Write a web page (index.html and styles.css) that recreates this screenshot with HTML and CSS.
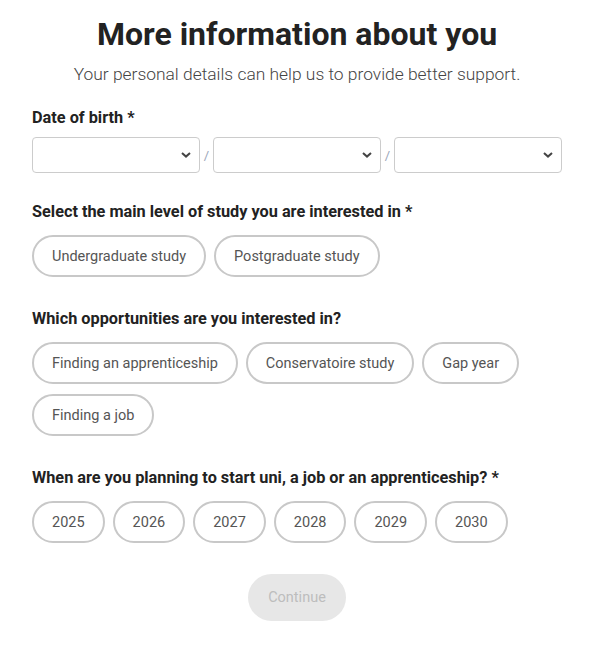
FILE: index.html
```html
<!DOCTYPE html>
<html lang="en">
<head>
<meta charset="utf-8">
<title>More information about you</title>
<link rel="stylesheet" href="styles.css">
</head>
<body>
<main class="form">
  <h1 class="title">More information about you</h1>
  <p class="lead">Your personal details can help us to provide better support.</p>

  <section class="field field-dob">
    <h2 class="label">Date of birth *</h2>
    <div class="dob">
      <div class="select"><svg class="chev" viewBox="0 0 10 6" width="10" height="6"><path d="M1 1l4 3.6 4-3.6" fill="none" stroke="#444" stroke-width="2"/></svg></div>
      <span class="sep">/</span>
      <div class="select"><svg class="chev" viewBox="0 0 10 6" width="10" height="6"><path d="M1 1l4 3.6 4-3.6" fill="none" stroke="#444" stroke-width="2"/></svg></div>
      <span class="sep">/</span>
      <div class="select"><svg class="chev" viewBox="0 0 10 6" width="10" height="6"><path d="M1 1l4 3.6 4-3.6" fill="none" stroke="#444" stroke-width="2"/></svg></div>
    </div>
  </section>

  <section class="field">
    <h2 class="label">Select the main level of study you are interested in *</h2>
    <div class="pills">
      <button class="pill">Undergraduate study</button>
      <button class="pill">Postgraduate study</button>
    </div>
  </section>

  <section class="field">
    <h2 class="label">Which opportunities are you interested in?</h2>
    <div class="pills">
      <button class="pill">Finding an apprenticeship</button>
      <button class="pill">Conservatoire study</button>
      <button class="pill">Gap year</button>
      <button class="pill">Finding a job</button>
    </div>
  </section>

  <section class="field">
    <h2 class="label">When are you planning to start uni, a job or an apprenticeship? *</h2>
    <div class="pills">
      <button class="pill">2025</button>
      <button class="pill">2026</button>
      <button class="pill">2027</button>
      <button class="pill">2028</button>
      <button class="pill">2029</button>
      <button class="pill">2030</button>
    </div>
  </section>

  <div class="actions">
    <button class="continue" disabled>Continue</button>
  </div>
</main>
</body>
</html>
```

FILE: styles.css
```css
* { box-sizing: border-box; }

html, body {
  margin: 0;
  background: #fff;
}

body {
  font-family: Roboto, "Noto Sans", sans-serif;
  color: #222;
}

.form {
  width: 530px;
  margin-left: 32px;
  padding-top: 14px;
}

.title {
  margin: 0;
  font-size: 32px;
  font-weight: 700;
  line-height: 40px;
  text-align: center;
  color: #222;
}

.lead {
  margin: 9px 0 0;
  font-size: 17.4px;
  font-weight: 300;
  line-height: 22px;
  text-align: center;
  color: #444;
}

.field {
  margin-top: 32px;
}

.field-dob {
  margin-top: 23px;
}

.field-dob + .field {
  margin-top: 29px;
}

.label {
  margin: 0 0 13px;
  font-size: 16.3px;
  font-weight: 700;
  line-height: 20px;
  color: #222;
}

.field-dob .label {
  margin-bottom: 9px;
}

.dob {
  display: flex;
  align-items: center;
}

.select {
  flex: 1;
  height: 36px;
  border: 1.5px solid #ccc;
  border-radius: 4px;
  display: flex;
  align-items: center;
  justify-content: flex-end;
  padding-right: 8px;
}

.sep {
  width: 13px;
  text-align: center;
  font-size: 13px;
  color: #9aa5b8;
}

.pills {
  display: flex;
  flex-wrap: wrap;
  gap: 10px 8px;
}

.pill {
  height: 42px;
  padding: 0 18px;
  border: 2px solid #c8c8c8;
  border-radius: 21px;
  background: #fff;
  font-family: inherit;
  font-size: 14.5px;
  color: #555;
}

.actions {
  display: flex;
  justify-content: center;
  margin-top: 31px;
}

.continue {
  width: 98px;
  height: 47px;
  border: none;
  border-radius: 24px;
  background: #e7e7e7;
  font-family: inherit;
  font-size: 14.5px;
  color: #bdbdbd;
}
```
